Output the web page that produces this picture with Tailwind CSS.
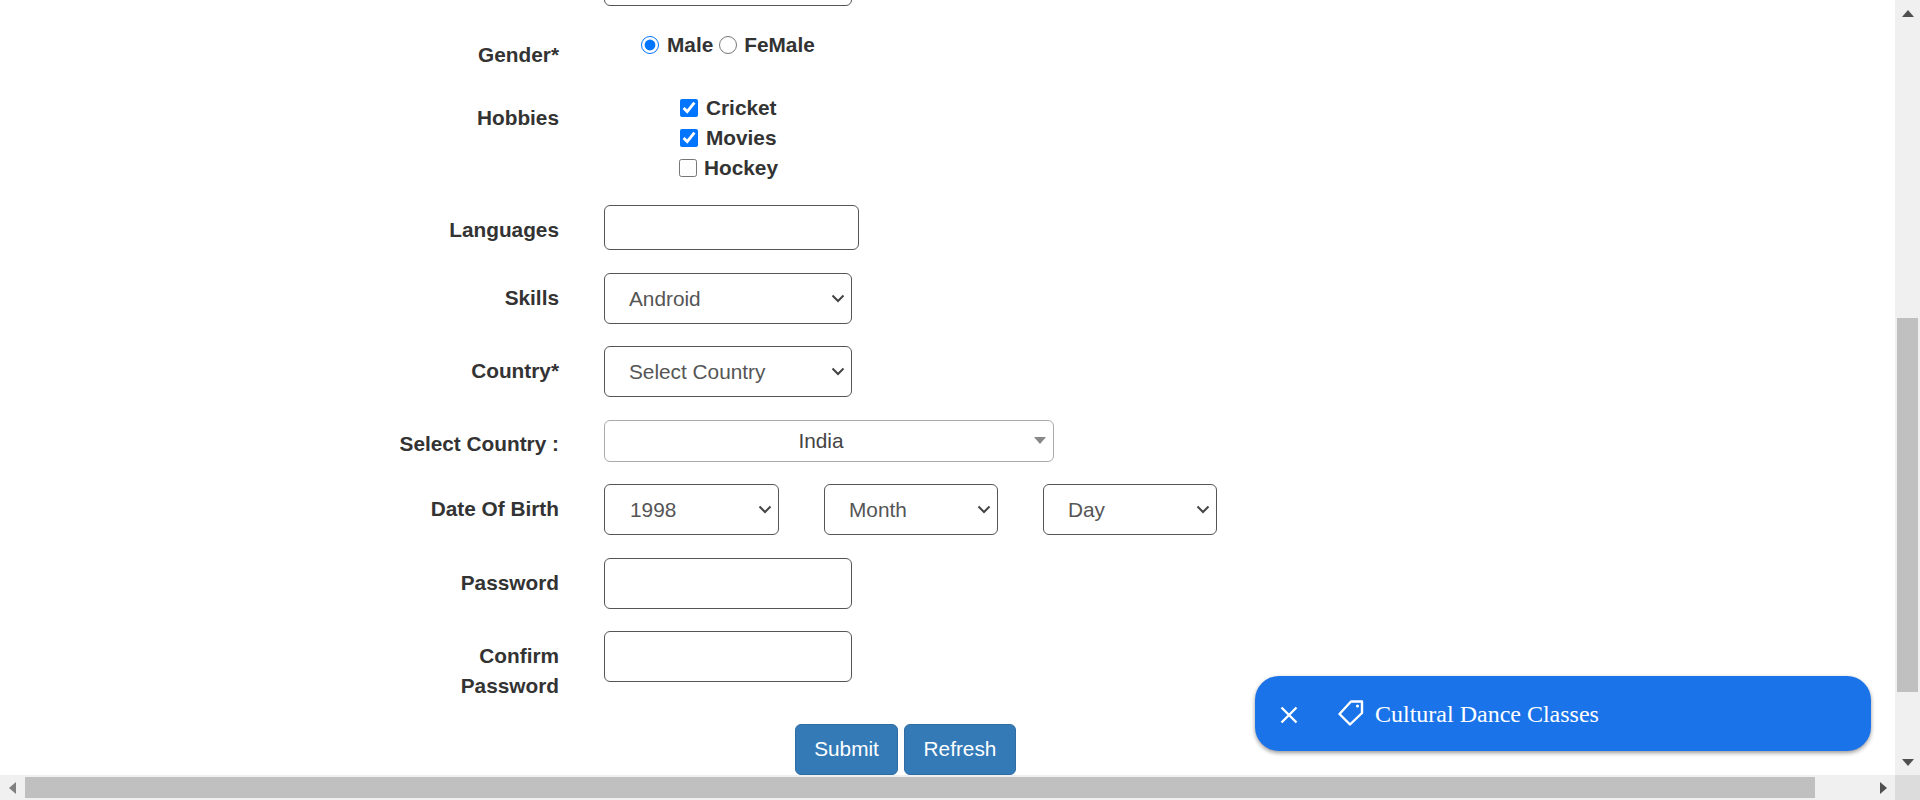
<!DOCTYPE html>
<html>
<head>
<meta charset="utf-8">
<script src="https://cdn.jsdelivr.net/npm/@tailwindcss/browser@4"></script>
</head>
<body class="bg-white overflow-hidden font-['Liberation_Sans',Arial,sans-serif] text-[20.8px] text-[#333]">
<div class="relative w-[1920px] h-[800px] flex flex-col overflow-hidden">
  <div class="flex h-[775px]">
    <main class="w-[1895px] h-[775px] overflow-hidden">
      <div class="h-[75px] -mt-[45px] flex">
        <div class="w-[559px]"></div>
        <input type="text" class="ml-[45px] w-[248px] h-[51px] border border-[#555] rounded-[6px] bg-white">
      </div>
      <div class="h-[63px] flex">
        <label class="w-[559px] pt-[10px] text-right font-bold leading-[30px]">Gender*</label>
        <div class="ml-[82px] h-[30px] flex items-center font-bold leading-[30px]">
          <input type="radio" name="g" checked class="w-[18px] h-[18px] m-0">
          <span class="ml-[8px]">Male</span>
          <input type="radio" name="g" class="w-[18px] h-[18px] ml-[6px]">
          <span class="ml-[7px]">FeMale</span>
        </div>
      </div>
      <div class="h-[112px] flex">
        <label class="w-[559px] pt-[10px] text-right font-bold leading-[30px]">Hobbies</label>
        <div class="ml-[120px] flex flex-col font-bold leading-[30px]">
          <div class="h-[30px] flex items-center"><input type="checkbox" checked class="w-[18px] h-[18px] ml-[1px]"><span class="ml-[8px]">Cricket</span></div>
          <div class="h-[30px] flex items-center"><input type="checkbox" checked class="w-[18px] h-[18px] ml-[1px]"><span class="ml-[8px]">Movies</span></div>
          <div class="h-[30px] flex items-center"><input type="checkbox" class="w-[18px] h-[18px]"><span class="ml-[7px]">Hockey</span></div>
        </div>
      </div>
      <div class="h-[68px] flex">
        <label class="w-[559px] pt-[10px] text-right font-bold leading-[30px]">Languages</label>
        <input type="text" class="ml-[45px] w-[255px] h-[45px] border border-[#555] rounded-[6px] bg-white">
      </div>
      <div class="h-[73px] flex">
        <label class="w-[559px] pt-[10px] text-right font-bold leading-[30px]">Skills</label>
        <div class="relative ml-[45px] w-[248px] h-[51px]">
          <select class="appearance-none w-full h-full pl-[24px] border border-[#555] rounded-[6px] bg-white text-[#555]"><option>Android</option></select>
          <svg width="14" height="9" viewBox="0 0 14 9" class="absolute right-[7px] top-[21px]" fill="none" stroke="#444" stroke-width="2"><path d="M1.5 1.5 L7 7 L12.5 1.5"/></svg>
        </div>
      </div>
      <div class="h-[74px] flex">
        <label class="w-[559px] pt-[10px] text-right font-bold leading-[30px]">Country*</label>
        <div class="relative ml-[45px] w-[248px] h-[51px]">
          <select class="appearance-none w-full h-full pl-[24px] border border-[#555] rounded-[6px] bg-white text-[#555]"><option>Select Country</option></select>
          <svg width="14" height="9" viewBox="0 0 14 9" class="absolute right-[7px] top-[21px]" fill="none" stroke="#444" stroke-width="2"><path d="M1.5 1.5 L7 7 L12.5 1.5"/></svg>
        </div>
      </div>
      <div class="h-[64px] flex">
        <label class="w-[559px] pt-[9px] text-right font-bold leading-[30px]">Select Country :</label>
        <div class="relative ml-[45px] w-[450px] h-[42px] border border-[#aaa] rounded-[6px] bg-white flex items-center justify-center text-[#444]">
          <span class="pr-[16px]">India</span>
          <span class="absolute right-[7px] top-[16px] w-0 h-0 border-l-[6px] border-r-[6px] border-t-[7px] border-l-transparent border-r-transparent border-t-[#888]"></span>
        </div>
      </div>
      <div class="h-[74px] flex">
        <label class="w-[559px] pt-[10px] text-right font-bold leading-[30px]">Date Of Birth</label>
        <div class="relative ml-[45px] w-[175px] h-[51px]">
          <select class="appearance-none w-full h-full pl-[25px] border border-[#555] rounded-[6px] bg-white text-[#555]"><option>1998</option></select>
          <svg width="14" height="9" viewBox="0 0 14 9" class="absolute right-[7px] top-[21px]" fill="none" stroke="#444" stroke-width="2"><path d="M1.5 1.5 L7 7 L12.5 1.5"/></svg>
        </div>
        <div class="relative ml-[45px] w-[174px] h-[51px]">
          <select class="appearance-none w-full h-full pl-[24px] border border-[#555] rounded-[6px] bg-white text-[#555]"><option>Month</option></select>
          <svg width="14" height="9" viewBox="0 0 14 9" class="absolute right-[7px] top-[21px]" fill="none" stroke="#444" stroke-width="2"><path d="M1.5 1.5 L7 7 L12.5 1.5"/></svg>
        </div>
        <div class="relative ml-[45px] w-[174px] h-[51px]">
          <select class="appearance-none w-full h-full pl-[24px] border border-[#555] rounded-[6px] bg-white text-[#555]"><option>Day</option></select>
          <svg width="14" height="9" viewBox="0 0 14 9" class="absolute right-[7px] top-[21px]" fill="none" stroke="#444" stroke-width="2"><path d="M1.5 1.5 L7 7 L12.5 1.5"/></svg>
        </div>
      </div>
      <div class="h-[73px] flex">
        <label class="w-[559px] pt-[10px] text-right font-bold leading-[30px]">Password</label>
        <input type="password" class="ml-[45px] w-[248px] h-[51px] border border-[#555] rounded-[6px] bg-white">
      </div>
      <div class="h-[93px] flex">
        <label class="w-[559px] pt-[10px] text-right font-bold leading-[30px]">Confirm<br>Password</label>
        <input type="password" class="ml-[45px] w-[248px] h-[51px] border border-[#555] rounded-[6px] bg-white">
      </div>
      <div class="flex pl-[795px] gap-[6px]">
        <button class="w-[103px] h-[51px] pb-[2px] bg-[#337ab7] text-white rounded-[6px] border border-[#2e6da4]">Submit</button>
        <button class="w-[112px] h-[51px] pb-[2px] bg-[#337ab7] text-white rounded-[6px] border border-[#2e6da4]">Refresh</button>
      </div>
    </main>
    <aside class="w-[25px] h-[775px] bg-[#f0f0f0] flex flex-col items-center relative">
      <svg width="12" height="7" viewBox="0 0 12 7" class="mt-[10px] shrink-0"><path d="M6 0 L12 7 L0 7 Z" fill="#505050"/></svg>
      <div class="w-[21px] h-[374px] bg-[#c0c0c0] mt-[301px] shrink-0"></div>
      <svg width="12" height="7" viewBox="0 0 12 7" class="mt-[67px] shrink-0"><path d="M0 0 L12 0 L6 7 Z" fill="#505050"/></svg>
    </aside>
  </div>
  <div class="h-[25px] bg-[#f0f0f0] flex items-center">
    <svg width="7" height="12" viewBox="0 0 7 12" class="ml-[9px] shrink-0"><path d="M7 0 L7 12 L0 6 Z" fill="#808080"/></svg>
    <div class="ml-[9px] w-[1790px] h-[21px] bg-[#c0c0c0] shrink-0"></div>
    <svg width="7" height="12" viewBox="0 0 7 12" class="ml-[65px] shrink-0"><path d="M0 0 L7 6 L0 12 Z" fill="#505050"/></svg>
    <div class="ml-[8px] w-[25px] h-[25px] bg-[#dcdcdc] shrink-0"></div>
  </div>
  <div class="absolute left-[1255px] top-[676px] w-[616px] h-[75px] bg-[#1a73e8] rounded-[24px] shadow-[0_2px_4px_rgba(0,0,0,0.4)] flex items-center text-white font-['Liberation_Serif',serif] text-[24px]">
    <svg width="24" height="24" viewBox="0 0 24 24" class="ml-[22px] mt-[2px] shrink-0" fill="none" stroke="#fff" stroke-width="2.4"><path d="M4.5 4.5 L19.5 19.5 M19.5 4.5 L4.5 19.5"/></svg>
    <svg width="26" height="26" viewBox="0 0 26 26" class="ml-[37px] -mt-[2px] shrink-0" fill="none" stroke="#fff" stroke-width="2.4" stroke-linejoin="round"><path d="M1.5 14 L13 1.5 H24 V13 L12 24.5 Z"/><circle cx="19.5" cy="6" r="1.6" fill="#fff" stroke="none"/></svg>
    <span class="ml-[11px]">Cultural Dance Classes</span>
  </div>
</div>
</body>
</html>
